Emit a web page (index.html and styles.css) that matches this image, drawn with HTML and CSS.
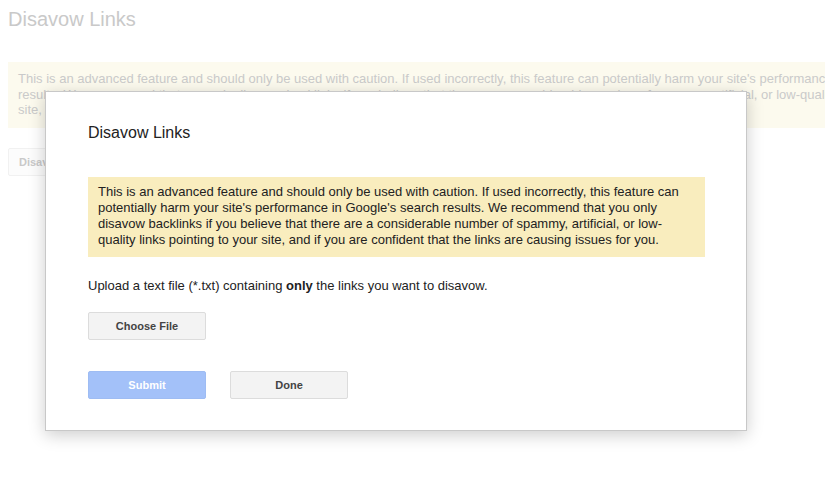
FILE: index.html
```html
<!DOCTYPE html>
<html>
<head>
<meta charset="utf-8">
<link rel="stylesheet" href="styles.css">
</head>
<body>
<div class="page">
  <h1 class="page-title">Disavow Links</h1>
  <div class="page-warning">This is an advanced feature and should only be used with caution. If used incorrectly, this feature can potentially harm your site's performance in Google's search<br>results. We recommend that you only disavow backlinks if you believe that there are a considerable number of spammy, artificial, or low-quality links pointing to your<br>site, and if you are confident that the links are causing issues for you.</div>
  <div class="page-actions"><span class="page-btn">Disavow Links</span></div>
</div>

<div class="modal">
  <h2 class="modal-title">Disavow Links</h2>
  <div class="modal-warning">This is an advanced feature and should only be used with caution. If used incorrectly, this feature can potentially harm your site's performance in Google's search results. We recommend that you only disavow backlinks if you believe that there are a considerable number of spammy, artificial, or low-quality links pointing to your site, and if you are confident that the links are causing issues for you.</div>
  <p class="modal-text">Upload a text file (*.txt) containing <b>only</b> the links you want to disavow.</p>
  <div class="file-row"><button class="btn">Choose File</button></div>
  <div class="actions">
    <button class="btn btn-primary">Submit</button>
    <button class="btn">Done</button>
  </div>
</div>
</body>
</html>
```
FILE: styles.css
```css
html, body {
  margin: 0;
  padding: 0;
  background: #fff;
  overflow: hidden;
  height: 477px;
}
body {
  font-family: Arial, "Liberation Sans", sans-serif;
  position: relative;
}
.page {
  width: 1100px;
  padding: 0 8px;
}
.page-title {
  margin: 0;
  padding-top: 7px;
  font-size: 20px;
  font-weight: normal;
  line-height: 24px;
  color: #c9c9c9;
}
.page-warning {
  margin-top: 31px;
  background: #fcfaee;
  color: #cacaca;
  font-size: 13px;
  line-height: 15.5px;
  padding: 9px 10px 10px;
  white-space: nowrap;
}
.page-actions {
  margin-top: 20px;
}
.page-btn {
  display: inline-block;
  height: 26px;
  line-height: 26px;
  padding: 0 10px;
  border: 1px solid #f1f1f1;
  border-radius: 2px;
  background: #fcfcfc;
  color: #c9c9c9;
  font-size: 11px;
  font-weight: bold;
}
.modal {
  position: absolute;
  left: 45px;
  top: 91px;
  width: 617px;
  padding: 30px 41px 31px 42px;
  background: #fff;
  border: 1px solid #c8c8c8;
  box-shadow: 0 4px 16px rgba(0, 0, 0, 0.2);
}
.modal-title {
  margin: 0;
  font-size: 16px;
  font-weight: normal;
  line-height: 22px;
  color: #222;
}
.modal-warning {
  margin-top: 33px;
  background: #f9edbe;
  color: #222;
  font-size: 13px;
  line-height: 16px;
  padding: 7px 10px 9px;
}
.modal-text {
  margin: 21px 0 0;
  font-size: 13px;
  line-height: 16px;
  color: #222;
}
.file-row {
  margin-top: 18px;
}
.actions {
  margin-top: 31px;
  display: flex;
  gap: 24px;
}
.btn {
  display: block;
  width: 118px;
  height: 28px;
  padding: 0;
  border: 1px solid #dcdcdc;
  border-radius: 2px;
  background: #f3f3f3;
  color: #444;
  font-family: Arial, "Liberation Sans", sans-serif;
  font-size: 11px;
  font-weight: bold;
}
.btn-primary {
  background: #a3c1f9;
  border-color: #9ebcf3;
  color: #fff;
}
```
